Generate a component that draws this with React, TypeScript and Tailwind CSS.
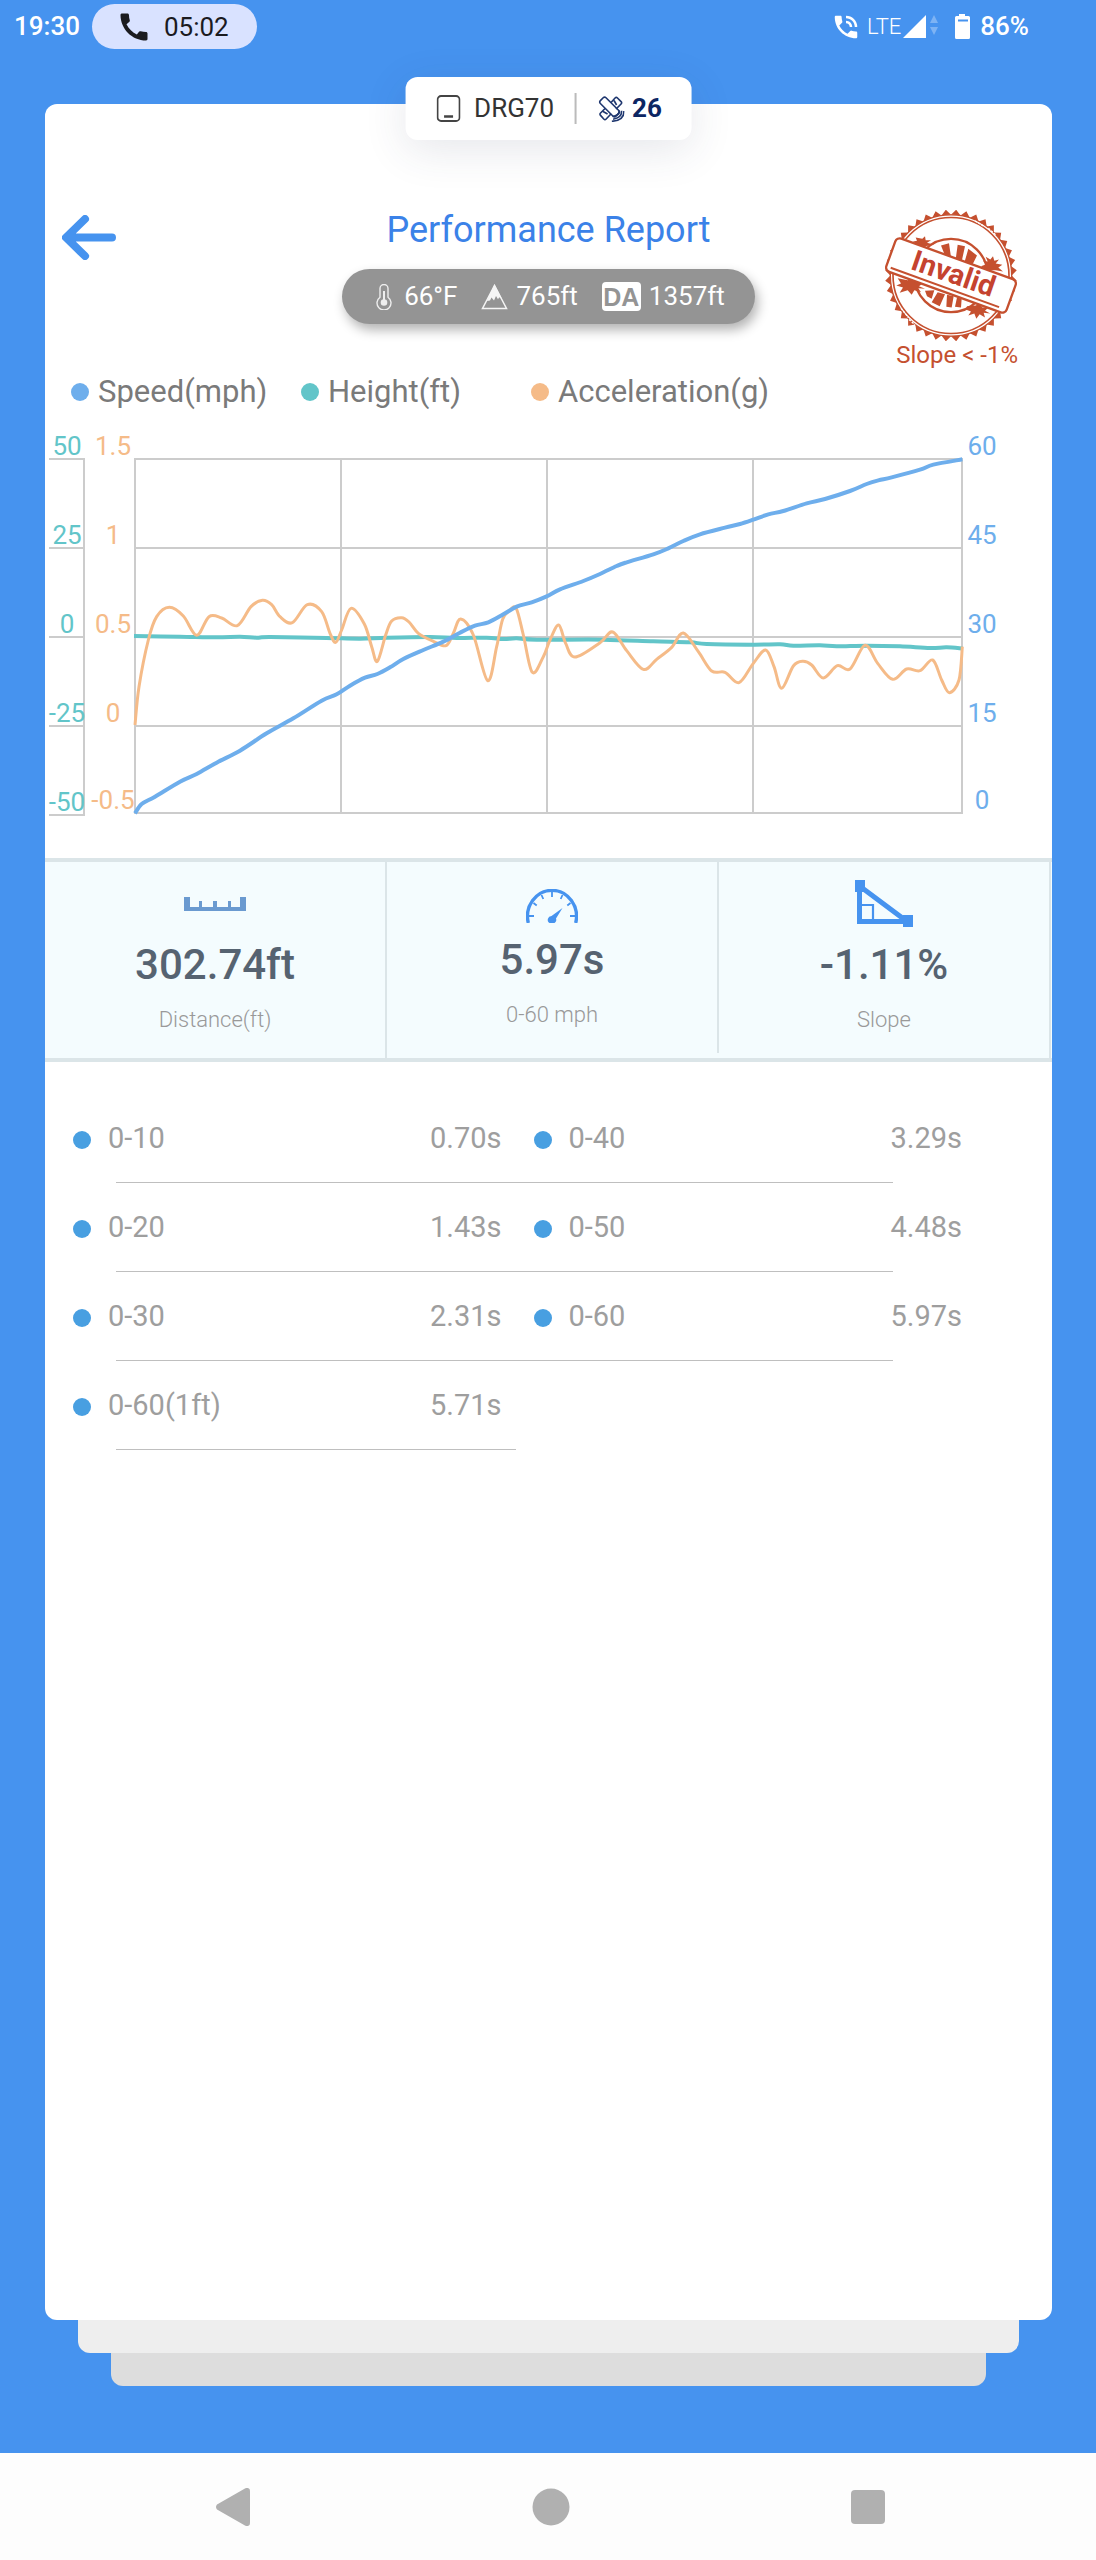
import type { ReactNode } from "react";
import { MdCall, MdPhoneInTalk } from "react-icons/md";

type Point = [number, number];

// Samples are stored in thirds of a chart unit
const SAMPLE_SCALE = 3;

const speed: Point[] = [
  [270, 1180], [290, 1152], [330, 1130], [405, 1085], [455, 1062], [515, 1028], [585, 992], [665, 940],
  [745, 895], [830, 842], [875, 823], [915, 797], [960, 773], [997, 762], [1035, 742], [1075, 717],
  [1135, 690], [1195, 665], [1245, 638], [1290, 617], [1330, 607], [1375, 583], [1415, 560], [1460, 547],
  [1505, 529], [1545, 508], [1615, 483], [1665, 462], [1715, 438], [1745, 427], [1825, 403], [1870, 385],
  [1915, 363], [1965, 343], [2040, 323], [2085, 312], [2125, 299], [2170, 283], [2215, 273], [2285, 250],
  [2340, 237], [2415, 213], [2465, 192], [2500, 181], [2540, 172], [2625, 149], [2665, 134], [2752, 118],
];

const height: Point[] = [
  [267, 648], [405, 650], [515, 652], [585, 650], [635, 653], [675, 651], [845, 654], [945, 656],
  [1025, 653], [1155, 651], [1235, 654], [1325, 653], [1375, 657], [1415, 655], [1475, 659], [1675, 659],
  [1825, 664], [1935, 667], [1985, 672], [2125, 674], [2205, 673], [2245, 677], [2325, 676], [2375, 679],
  [2465, 677], [2565, 679], [2655, 684], [2705, 682], [2753, 686],
];

const acceleration: Point[] = [
  [270, 915], [282, 800], [310, 660], [335, 590], [373, 562], [415, 588], [455, 646], [492, 590],
  [530, 594], [577, 617], [618, 560], [652, 541], [680, 554], [705, 590], [742, 608], [787, 554],
  [830, 575], [855, 640], [872, 667], [890, 630], [918, 565], [958, 612], [980, 680], [997, 724],
  [1022, 645], [1040, 603], [1070, 593], [1092, 606], [1120, 640], [1165, 664], [1203, 677], [1225, 640],
  [1247, 597], [1285, 645], [1328, 782], [1355, 680], [1373, 598], [1395, 570], [1414, 566], [1435, 645],
  [1462, 757], [1495, 710], [1515, 660], [1541, 615], [1562, 670], [1590, 711], [1665, 668], [1703, 636],
  [1745, 692], [1795, 748], [1835, 718], [1880, 682], [1915, 639], [1960, 695], [2000, 753], [2040, 757],
  [2082, 788], [2125, 730], [2162, 690], [2187, 740], [2210, 805], [2245, 738], [2273, 724], [2300, 735],
  [2335, 774], [2377, 737], [2415, 747], [2460, 676], [2498, 730], [2543, 778], [2585, 747], [2625, 752],
  [2663, 720], [2690, 780], [2713, 818], [2742, 780], [2752, 680],
];

// Catmull-Rom spline turned into cubic segments
const smoothPath = (samples: Point[]) => {
  const pts = samples.map(([x, y]) => [x / SAMPLE_SCALE, y / SAMPLE_SCALE]);
  let d = `M${pts[0][0]} ${pts[0][1]}`;
  for (let i = 0; i < pts.length - 1; i++) {
    const a = pts[i - 1] ?? pts[i];
    const b = pts[i];
    const c = pts[i + 1];
    const e = pts[i + 2] ?? c;
    d += `C${b[0] + (c[0] - a[0]) / 6} ${b[1] + (c[1] - a[1]) / 6} ${c[0] - (e[0] - b[0]) / 6} ${c[1] - (e[1] - b[1]) / 6} ${c[0]} ${c[1]}`;
  }
  return d;
};

const axisRows = [
  { height: "50", accel: "1.5", speed: "60", y: 35 },
  { height: "25", accel: "1", speed: "45", y: 124 },
  { height: "0", accel: "0.5", speed: "30", y: 213 },
  { height: "-25", accel: "0", speed: "15", y: 302 },
  { height: "-50", accel: "-0.5", speed: "0", y: 389 },
];

const legend = [
  { label: "Speed(mph)", dot: "bg-[#6eaeec]" },
  { label: "Height(ft)", dot: "bg-[#62c5c9]" },
  { label: "Acceleration(g)", dot: "bg-[#f5bb88]" },
];

const splits = [
  [{ range: "0-10", time: "0.70s" }, { range: "0-40", time: "3.29s" }],
  [{ range: "0-20", time: "1.43s" }, { range: "0-50", time: "4.48s" }],
  [{ range: "0-30", time: "2.31s" }, { range: "0-60", time: "5.97s" }],
  [{ range: "0-60(1ft)", time: "5.71s" }],
];

const StatusBar = () => (
  <div className="flex h-[53px] items-start justify-between pl-3.5 pr-[67px] text-[26px] leading-[53px] text-white">
    <div className="flex items-start gap-3">
      <span className="font-medium">19:30</span>
      <div className="mt-1 flex h-[45px] items-center gap-3 rounded-full bg-[#d9e2ff] px-7 text-[#1b1b1f]">
        <MdCall className="-ml-1 size-9" />
        <span className="leading-[46px]">05:02</span>
      </div>
    </div>
    <div className="flex h-[53px] items-center">
      <MdPhoneInTalk className="size-[30px]" />
      <span className="ml-1.5 text-[22px] font-light">LTE</span>
      <svg className="ml-0.5 h-[23px] w-9" viewBox="0 0 36 23" fill="currentColor">
        <path d="M0 23 23 0v23z" />
        <path d="m27 8 4-8 4 8zM27 12h8l-4 8z" opacity=".3" />
      </svg>
      <svg className="ml-4 h-[25px] w-[15px]" viewBox="0 0 15 25">
        <path d="M4 0h6v2h3.500q1.500 0 1.500 1.500v20q0 1.500-1.500 1.500h-12q-1.500 0-1.500-1.500v-20Q0 2 1.500 2H4z" fill="#fff" />
        <path d="M3 5.500h10v2H3z" fill="#4693ef" />
      </svg>
      <span className="ml-2.5 font-medium">86%</span>
    </div>
  </div>
);

const DeviceBadge = () => (
  <div className="absolute -top-[27px] left-1/2 flex h-[63px] -translate-x-1/2 items-center whitespace-nowrap rounded-xl bg-white pl-[31px] pr-[30px] text-[26px] text-[#333] shadow-[0_10px_44px_rgba(50,60,90,0.12)]">
    <svg className="h-[28px] w-6" viewBox="0 0 24 28" fill="none" stroke="#444">
      <rect x="1" y="1" width="22" height="25" rx="3.500" strokeWidth="1.800" />
      <path d="M7.500 21.500h9" strokeWidth="2.400" />
    </svg>
    <span className="ml-3.5">DRG70</span>
    <span className="ml-5 h-[31px] w-[2px] bg-[#bbb]" />
    {/* Satellite: body, four panel corners and signal arcs */}
    <svg className="ml-[22px] size-[26px]" viewBox="0 0 26 26" fill="none" stroke="#1f376f" strokeWidth="1.600" strokeLinejoin="round">
      <rect x="-11" y="-4" width="22" height="8" rx="2" transform="translate(11 11) rotate(45)" />
      <path d="M8.200 2.600v8.400M2.600 8.200H11" opacity="0" />
      <path d="M12.500 6.500 16.500 2q1.200-1.200 2.400 0l3.600 3.600q1.200 1.200 0 2.400l-5 5M6.500 12.500 2 17q-1.200 1.200 0 2.400L5.200 23q1.200 1.200 2.400 0l5-5.300M15.500 4.500l2.500 4.500M4.500 15.500 9 18" />
      <path d="M20.500 14.500q.5 5-6.500 6M23 14.800q.5 7-8.500 8.400M25.300 15q.5 9.500-12 10.300" />
    </svg>
    <span className="ml-2 font-bold text-[#0c2663]">26</span>
  </div>
);

const teeth = Array.from({ length: 80 }, (_, i) => {
  const angle = (i * Math.PI) / 40;
  const r = i % 2 ? 198 : 182;
  return `${(Math.cos(angle) * r).toFixed(1)},${(Math.sin(angle) * r).toFixed(1)}`;
}).join(" ");

const InvalidStamp = () => (
  <svg className="h-[131px] w-[133px]" viewBox="0 0 133 131" role="img" aria-label="Invalid run">
    <g transform="translate(66 65.500) scale(.3333)" fill="#c5502f" stroke="#c5502f">
      <polygon points={teeth} stroke="none" />
      <circle r="182" fill="#fff" strokeWidth="4" />
      <circle r="174" fill="none" strokeWidth="5" />
      <path d="M72-164 98-148M112-142l24 22M-150 98l22 28M-126 132l18 16" stroke="#fff" strokeWidth="4" strokeDasharray="7 4" />
      <circle r="110" fill="none" strokeWidth="7" />
      <path
        stroke="none"
        d="M-30-90-6-97 0-55-18-60zM20-92 42-88 32-42 14-48zM52-80 78-60 62-28 40-38zM-78 46-50 44-58 70-72 62zM-40 50-18 56-34 92-58 80zM-12 58 8 62 2 96-14 94zM18 66 32 70 30 96 12 94z"
      />
      <path
        stroke="none"
        d="M-106-114l20 4 8-8 2 12 16 0-12 8 22 6-28 4 10 10-24-8-18 2 6-10-10-8 12-2zM104-56l14 8 8-10 4 14 14-4-10 12 20 4-12 8 14 12-22-4-26 0-18-12 16-6-10-10 14 2zM-160 8l30 6 12-4 10 12 26 0-14 10 18 8-20-2 8 12-20-6-8 14-12-14-24 8 10-16-20-6 14-6zM48 92l26-2 12-6 8 12 18 0-10 10 16 8-20-2 4 14-16-10-10 14-6-16-18 6 8-12-16-6z"
      />
      <g transform="rotate(20)">
        <rect x="-192" y="-53" width="384" height="106" rx="14" fill="#fff" strokeWidth="7" />
        <path d="M-178 40H168" strokeWidth="6" />
      </g>
    </g>
    <text x="68" y="73" transform="rotate(19 67 65)" textAnchor="middle" fill="#c5432f" fontSize="29" className="font-bold">
      Invalid
    </text>
  </svg>
);

const Header = () => (
  <header className="grid grid-cols-[1fr_auto_1fr] items-start pl-[17px] pr-[34px] pt-[106px]">
    <button type="button" aria-label="Back" className="mt-[5px] w-fit cursor-pointer">
      <svg className="h-[45px] w-[54px]" viewBox="0 0 54 45" fill="none" stroke="#4693ef" strokeWidth="8" strokeLinecap="round" strokeLinejoin="round">
        <path d="M23 4 4 22.500 23 41M8 22.500h42" />
      </svg>
    </button>
    <div className="ml-[17px] flex flex-col items-center">
      <h1 className="text-4xl leading-10 text-[#3b82e8]">Performance Report</h1>
      <div className="mt-[19px] flex h-[55px] items-center rounded-full bg-[#949494] pl-[34px] pr-[30px] text-[26px] text-white shadow-[3px_6px_12px_rgba(0,0,0,0.3)]">
        <svg className="h-[26px] w-4" viewBox="0 0 16 26" fill="none" stroke="#eee" strokeWidth="1.400">
          <path d="M4 4.500a4 4 0 0 1 8 0v8.700a7 7 0 1 1-8 0z" />
          <path d="M8 7v11" strokeWidth="2" />
          <circle cx="8" cy="18.500" r="2.600" fill="#eee" />
        </svg>
        <span className="ml-3">66°F</span>
        <svg className="ml-6 size-[27px]" viewBox="0 0 27 27" fill="#f5f5f5">
          <path d="M13.500 2.500 1.500 25.500h24z" fill="none" stroke="#f5f5f5" strokeWidth="1.500" />
          <path d="m13.500 1 7.500 15-2.800-1.700-1.200 2-2-3.300-2 4.500-2.500-3-1.500 3-3 .500z" />
        </svg>
        <span className="ml-2">765ft</span>
        <span className="ml-6 h-[29px] w-[39px] rounded bg-white text-center font-['Liberation_Sans',sans-serif] text-[25px] font-bold leading-[30px] text-[#949494]">
          DA
        </span>
        <span className="ml-2">1357ft</span>
      </div>
    </div>
    <div className="flex flex-col items-end text-2xl leading-7 text-[#c5502f]">
      <InvalidStamp />
      <p>Slope &lt; -1%</p>
    </div>
  </header>
);

const Chart = () => (
  <svg className="mt-2 w-full" viewBox="0 0 1007 410" fontSize="26" textAnchor="middle" role="img" aria-label="Speed, height and acceleration">
    <g stroke="#ccc" strokeWidth="2" fill="none">
      <path d="M4 39h36M4 128h36M4 217h36M4 306h36M4 395h36M39 38v358" />
      <path d="M89 39h829M90 128h827M90 217h827M90 306h827M89 393h829M90 39v354M296 39v354M502 39v354M708 39v354M917 39v354" />
    </g>
    {axisRows.map((row, i) => (
      <g key={row.y}>
        <text x="22" y={i === 4 ? row.y + 2 : row.y} fill="#62c5c9">{row.height}</text>
        <text x="68" y={row.y} fill="#f5bb88">{row.accel}</text>
        <text x="937" y={row.y} fill="#6eaeec">{row.speed}</text>
      </g>
    ))}
    <g fill="none">
      <path d={smoothPath(height)} stroke="#62c5c9" strokeWidth="4" />
      <path d={smoothPath(acceleration)} stroke="#f5bb88" strokeWidth="3" />
      <path d={smoothPath(speed)} stroke="#6eaeec" strokeWidth="4" />
    </g>
  </svg>
);

const RulerIcon = () => (
  <svg className="h-[14px] w-[62px]" viewBox="0 0 62 14" fill="#6a9ad0">
    <path d="M0 0h6v10h9V4h3v6h11V4h4v6h11V4h3v6h9V0h6v14H0z" />
  </svg>
);

const GaugeIcon = () => (
  <svg className="h-[34px] w-[52px]" viewBox="0 0 52 34" fill="none" stroke="#4693ef">
    <path d="M2.300 34A24.500 26 0 1 1 49.700 34" strokeWidth="3.400" />
    <path d="M26 3v5M15.500 6l1.800 4M36.500 6l-1.800 4M7.500 14l3.200 2.500M44.500 14l-3.200 2.500M3 27h5M49 27h-5" strokeWidth="1.800" />
    <path d="M36.500 19 30 29.500A3.800 3.800 0 0 1 28.500 34h-5a3.800 3.800 0 0 1 2-7z" fill="#4693ef" stroke="none" />
  </svg>
);

const SlopeIcon = () => (
  <svg className="h-[47px] w-[58px]" viewBox="0 0 58 47" fill="none" stroke="#4693ef">
    <path d="M4.500 6v35.500H52z" strokeWidth="5" />
    <path d="M5 25h13v16" strokeWidth="2.200" />
    <path d="M0 0h10v12H0zM48 35h10v12H48z" fill="#4693ef" stroke="none" />
  </svg>
);

const Stat = ({ icon, value, label, top, divider }: { icon: ReactNode; value: string; label: string; top: string; divider: string }) => (
  <div className="relative flex flex-col items-center pr-[2px]">
    <div className={`flex items-center ${top}`}>{icon}</div>
    <p className="text-[42px] font-medium leading-[48px] text-[#566371]">{value}</p>
    <p className="mt-[15px] text-[22px] font-light leading-8 text-[#999]">{label}</p>
    <span className={`absolute right-0 top-0 w-[2px] bg-[#dbe5e8] ${divider}`} />
  </div>
);

const Splits = () => (
  <ul className="pt-8 text-[29px] text-[#9e9e9e]">
    {splits.map((row) => (
      <li key={row[0].range}>
        <div className="grid h-[88px] grid-cols-2 gap-x-8 pl-7 pr-[90px] pt-0.5">
          {row.map((split) => (
            <div key={split.range} className="flex items-center">
              <span className="mt-0.5 size-[18px] rounded-full bg-[#489fe1]" />
              <span className="ml-[17px] flex-1">{split.range}</span>
              <span>{split.time}</span>
            </div>
          ))}
        </div>
        <div className={`ml-[71px] h-px bg-[#bfbfbf] ${row.length > 1 ? "mr-[159px]" : "w-[400px]"}`} />
      </li>
    ))}
  </ul>
);

const NavBar = () => (
  <nav className="flex h-[107px] items-center justify-between bg-[#fdfdfd] pl-[214px] pr-[209px] text-[#b0b0b0]">
    <button type="button" aria-label="Back">
      <svg className="size-[38px]" viewBox="0 0 38 38" fill="currentColor">
        <path d="M30.500.8Q33-1 35.500 1q.5.500.5 3v30q0 2.500-.5 3-2.500 2-5 .2L3 21.500q-2-2.500 0-5z" />
      </svg>
    </button>
    <button type="button" aria-label="Home">
      <svg className="size-[38px]" viewBox="0 0 38 38" fill="currentColor">
        <circle cx="19" cy="19" r="18.500" />
      </svg>
    </button>
    <button type="button" aria-label="Recent apps">
      <svg className="size-[38px]" viewBox="0 0 38 38" fill="currentColor">
        <rect x="2" y="2" width="34" height="34" rx="4" />
      </svg>
    </button>
  </nav>
);

const App = () => {
  return (
    <div className="flex min-h-screen flex-col bg-[#4693ef] font-['Roboto','Liberation_Sans',sans-serif]">
      <StatusBar />
      <main className="mt-[51px] flex flex-1 flex-col pb-[67px] pl-[45px] pr-11">
        <section className="relative flex-1 rounded-xl bg-white">
          <DeviceBadge />
          <Header />
          <ul className="mt-[3px] flex pl-[26px] text-[31px] leading-10 text-[#7a7a7a]">
            {legend.map((item) => (
              <li key={item.label} className="flex w-[230px] items-center gap-[9px] whitespace-nowrap">
                <span className="flex size-[18px] shrink-0">
                  <span className={`size-full rounded-full ${item.dot}`} />
                </span>
                {item.label}
              </li>
            ))}
          </ul>
          <Chart />
          <div className="mt-7 grid h-[204px] grid-cols-[34fr_33fr_33fr] border-y-4 border-[#dbe5e8] bg-[#f4fcfe] pr-px">
            <Stat icon={<RulerIcon />} value="302.74ft" label="Distance(ft)" top="h-[79px] pt-1" divider="h-full" />
            <Stat icon={<GaugeIcon />} value="5.97s" label="0-60 mph" top="h-[74px] pt-[14px]" divider="h-[191px]" />
            <Stat icon={<SlopeIcon />} value="-1.11%" label="Slope" top="h-[79px] pt-1" divider="h-full" />
          </div>
          <Splits />
        </section>
        {/* Stacked sheets under the card */}
        <div className="mx-[33px] h-[33px] rounded-b-xl bg-[#eee]" />
        <div className="mx-[66px] h-[33px] rounded-b-xl bg-[#ddd]" />
      </main>
      <NavBar />
    </div>
  );
};

export default App;
